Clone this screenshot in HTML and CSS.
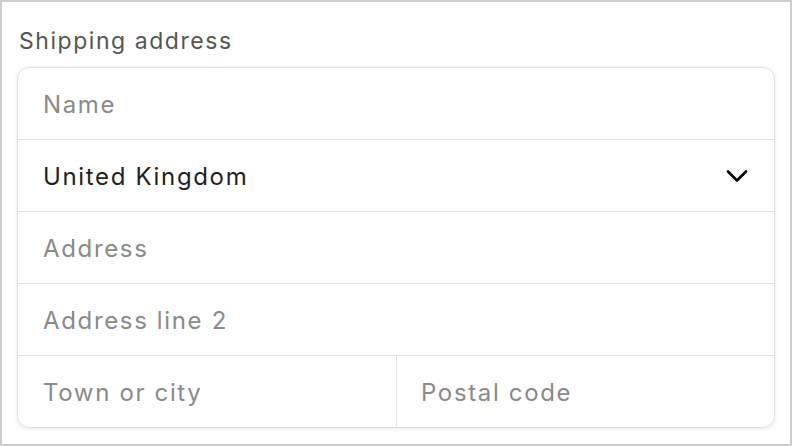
FILE: index.html
```html
<!DOCTYPE html>
<html>
<head>
<meta charset="utf-8">
<link rel="stylesheet" href="styles.css">
</head>
<body>
<div class="frame">
  <div class="label">Shipping address</div>
  <div class="card">
    <div class="row"><span class="ph">Name</span></div>
    <div class="row select"><span class="val">United Kingdom</span>
      <svg class="chev" width="22" height="14" viewBox="0 0 22 14"><path d="M2 2.5 L11 11.5 L20 2.5" fill="none" stroke="#000" stroke-width="2.6" stroke-linecap="round" stroke-linejoin="round"/></svg>
    </div>
    <div class="row"><span class="ph">Address</span></div>
    <div class="row"><span class="ph">Address line 2</span></div>
    <div class="row split">
      <div class="cell"><span class="ph">Town or city</span></div>
      <div class="cell"><span class="ph">Postal code</span></div>
    </div>
  </div>
</div>
</body>
</html>
```
FILE: styles.css
```css
html, body { margin: 0; padding: 0; background: #fff; }
body { font-family: Inter, "Liberation Sans", sans-serif; }
.frame {
  box-sizing: border-box;
  width: 792px; height: 446px;
  border: 2px solid #cdcdcd;
  padding: 0 15px;
  display: flex; flex-direction: column;
}
.label {
  font-size: 23px; letter-spacing: 1.55px; color: #555;
  height: 65px; display: flex; align-items: flex-end;
  padding: 0 0 14px 2px; box-sizing: border-box;
  line-height: 1;
}
.card {
  border: 1px solid #dedede;
  border-radius: 12px;
  box-shadow: 0 1px 4px rgba(0,0,0,0.09);
  display: flex; flex-direction: column;
}
.row {
  height: 71px;
  display: flex; align-items: center;
  padding: 0 25px;
  border-top: 1px solid #e2e2e2;
  font-size: 24px; letter-spacing: 1.65px;
  line-height: 1;
}
.row > span, .cell > span { position: relative; top: 1px; }
.row:first-child { border-top: none; }
.ph { color: #8a8a8a; }
.val { color: #1f1f1f; }
.select { justify-content: space-between; padding-right: 26px; }
.split { padding: 0; }
.cell { flex: 1; height: 100%; display: flex; align-items: center; padding: 0 25px; }
.cell + .cell { border-left: 1px solid #e2e2e2; padding-left: 24px; }
```
